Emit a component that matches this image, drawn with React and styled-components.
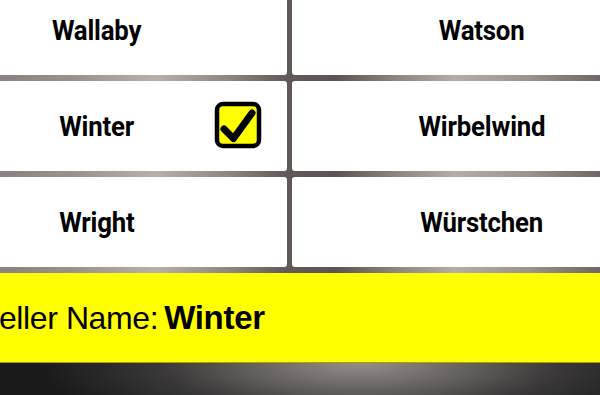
import React from "react";
import styled, { createGlobalStyle } from "styled-components";

const GlobalStyle = createGlobalStyle`
  html, body {
    margin: 0;
    padding: 0;
    background: #111;
  }
  body {
    width: 600px;
    height: 395px;
    overflow: hidden;
    font-family: "Liberation Sans", Arial, sans-serif;
  }
`;

const Screen = styled.div`
  width: 600px;
  height: 395px;
  overflow: hidden;
  display: flex;
  flex-direction: column;
`;

const GridArea = styled.div`
  height: 273px;
  overflow: hidden;
  background: linear-gradient(
    90deg,
    #8a8280 0%,
    #9a918e 12%,
    #b7afab 26%,
    #8d8683 38%,
    #5f5a57 48%,
    #5a5552 56%,
    #8c8580 66%,
    #b3aca7 76%,
    #9a938f 88%,
    #6e6966 100%
  );
`;

const Grid = styled.div`
  display: grid;
  grid-template-columns: 380px 380px;
  grid-auto-rows: 90px;
  column-gap: 5px;
  row-gap: 6px;
  margin-left: -93px;
  margin-top: -15px;
`;

const Cell = styled.div`
  position: relative;
  background: #fff;
  border-radius: 3px;
  display: flex;
  align-items: center;
  justify-content: center;
`;

const Label = styled.span`
  font-family: Roboto, "Liberation Sans", Arial, sans-serif;
  font-weight: 700;
  font-size: 28px;
  color: #000;
  display: inline-block;
  transform: scaleX(0.92);
  letter-spacing: -0.2px;
`;

const CheckBox = styled.svg`
  position: absolute;
  right: 25px;
  top: 50%;
  margin-top: -25px;
  width: 48px;
  height: 48px;
`;

const InfoBar = styled.div`
  height: 90px;
  background: #ffff00;
  border-bottom: 1px solid #a3a300;
  box-sizing: border-box;
  display: flex;
  align-items: center;
  white-space: nowrap;
`;

const InfoText = styled.div`
  margin-left: -22px;
  font-family: "Liberation Sans", Arial, sans-serif;
  font-size: 32px;
  color: #000;
  letter-spacing: -0.4px;
`;

const InfoValue = styled.b`
  font-weight: 700;
  font-size: 33px;
  margin-left: 6px;
  letter-spacing: -0.3px;
`;

const Footer = styled.div`
  flex: 1;
  background: radial-gradient(
    ellipse 320px 80px at 60% 0%,
    #948e8c 0%,
    #6e6968 28%,
    #3a3838 62%,
    #1a1a1a 100%
  ),
    #141414;
  background-repeat: no-repeat;
`;

const sellers = [
  { name: "Wallaby" },
  { name: "Watson" },
  { name: "Winter", checked: true },
  { name: "Wirbelwind" },
  { name: "Wright" },
  { name: "Würstchen" },
];

function Check() {
  return (
    <CheckBox viewBox="0 0 48 48">
      <rect x="3" y="3" width="42" height="42" rx="6" fill="#ffff00" stroke="#000" strokeWidth="4.5" />
      <path
        d="M10 28 L19.5 37.5 L38 12"
        fill="none"
        stroke="#000"
        strokeWidth="7"
        strokeLinecap="round"
        strokeLinejoin="round"
      />
    </CheckBox>
  );
}

export default function App() {
  const selected = sellers.find((s) => s.checked);
  return (
    <>
      <GlobalStyle />
      <Screen>
        <GridArea>
          <Grid>
            {sellers.map((s) => (
              <Cell key={s.name}>
                <Label>{s.name}</Label>
                {s.checked && <Check />}
              </Cell>
            ))}
          </Grid>
        </GridArea>
        <InfoBar>
          <InfoText>
            Seller Name:<InfoValue>{selected.name}</InfoValue>
          </InfoText>
        </InfoBar>
        <Footer />
      </Screen>
    </>
  );
}
